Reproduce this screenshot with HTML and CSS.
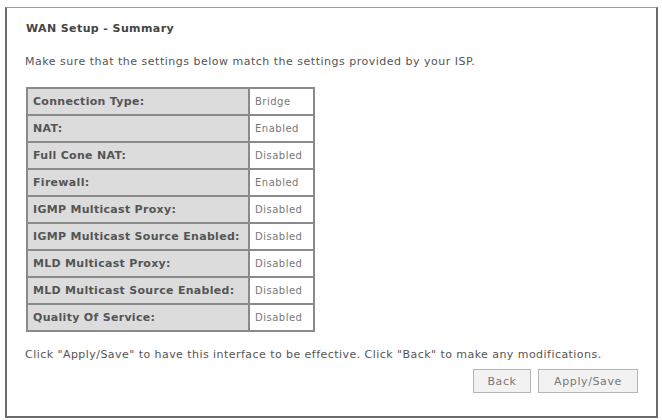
FILE: index.html
```html
<!DOCTYPE html>
<html lang="en">
<head>
    <meta charset="UTF-8">
    <title>WAN Setup - Summary</title>
    <link rel="stylesheet" href="styles.css">
</head>
<body>
    <div class="panel">
        <div class="title">WAN Setup - Summary</div>
        <p class="note">Make sure that the settings below match the settings provided by your ISP.</p>

        <table class="summary">
            <tr><td class="label">Connection Type:</td><td class="value">Bridge</td></tr>
            <tr><td class="label">NAT:</td><td class="value">Enabled</td></tr>
            <tr><td class="label">Full Cone NAT:</td><td class="value">Disabled</td></tr>
            <tr><td class="label">Firewall:</td><td class="value">Enabled</td></tr>
            <tr><td class="label">IGMP Multicast Proxy:</td><td class="value">Disabled</td></tr>
            <tr><td class="label">IGMP Multicast Source Enabled:</td><td class="value">Disabled</td></tr>
            <tr><td class="label">MLD Multicast Proxy:</td><td class="value">Disabled</td></tr>
            <tr><td class="label">MLD Multicast Source Enabled:</td><td class="value">Disabled</td></tr>
            <tr><td class="label">Quality Of Service:</td><td class="value">Disabled</td></tr>
        </table>

        <p class="note footer">Click "Apply/Save" to have this interface to be effective. Click "Back" to make any modifications.</p>
        <div class="actions">
            <button class="btn-back">Back</button>
            <button class="btn-save">Apply/Save</button>
        </div>
    </div>
</body>
</html>
```

FILE: styles.css
```css
body {
    margin: 0;
    background: #fff;
    font-family: "DejaVu Sans", Verdana, sans-serif;
    color: #555;
}
.panel {
    box-sizing: border-box;
    width: 653px;
    height: 411px;
    margin: 7px 0 0 5px;
    padding: 14px 18px 0 19px;
    border: 2px solid #6a6a6a;
    border-top: 1px solid #9a9a9a;
}
.title {
    font-size: 11px;
    font-weight: bold;
    letter-spacing: 0.4px;
    line-height: 14px;
    color: #444;
}
.note {
    margin: 19px 0 0 -1px;
    font-size: 11px;
    letter-spacing: 0.5px;
    line-height: 14px;
}
.summary {
    margin-top: 18px;
    border-collapse: collapse;
    border: 2px solid #8a8a8a;
}
.summary td {
    height: 27px;
    padding: 0 5px;
    border: 2px solid #8a8a8a;
    box-sizing: border-box;
    white-space: nowrap;
}
.label {
    width: 222px;
    background: #dcdcdc;
    font-size: 11px;
    font-weight: bold;
    letter-spacing: 0.3px;
    color: #555;
}
.value {
    width: 65px;
    background: #fff;
    font-size: 10px;
    letter-spacing: 0.5px;
    color: #777;
}
.footer {
    margin-top: 16px;
    letter-spacing: 0.45px;
}
.actions {
    display: flex;
    justify-content: flex-end;
    gap: 7px;
    margin-top: 7px;
}
button {
    height: 24px;
    font-family: "DejaVu Sans", Verdana, sans-serif;
    font-size: 11px;
    letter-spacing: 0.6px;
    color: #777;
    background: #f2f2f2;
    border: 1px solid #b5b5b5;
    padding: 0;
}
.btn-back { width: 58px; }
.btn-save { width: 100px; }
```
